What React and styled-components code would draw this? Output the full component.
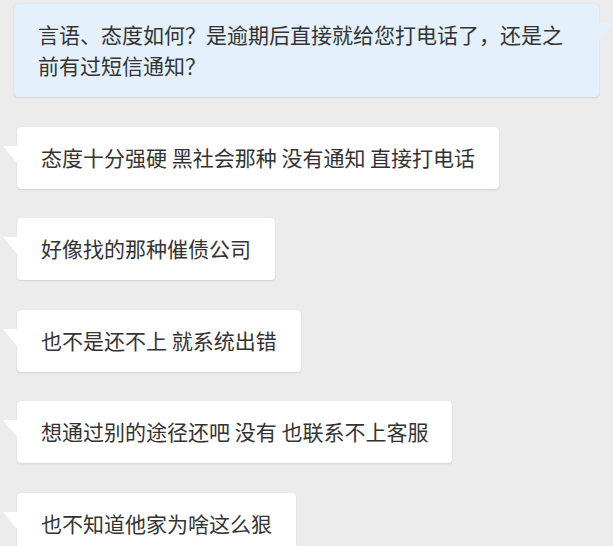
import React from 'react'
import styled, { createGlobalStyle } from 'styled-components'

const messages = [
  { from: 'me', text: '言语、态度如何？是逾期后直接就给您打电话了，还是之前有过短信通知？' },
  { from: 'them', text: '态度十分强硬 黑社会那种 没有通知 直接打电话' },
  { from: 'them', text: '好像找的那种催债公司' },
  { from: 'them', text: '也不是还不上 就系统出错' },
  { from: 'them', text: '想通过别的途径还吧 没有 也联系不上客服' },
  { from: 'them', text: '也不知道他家为啥这么狠' },
]

const GlobalStyle = createGlobalStyle`
  html, body {
    margin: 0;
    padding: 0;
    background: #ececec;
    overflow: hidden;
  }
  body {
    font-family: "Noto Sans CJK SC", "Noto Sans", sans-serif;
  }
`

const Chat = styled.div`
  display: flex;
  flex-direction: column;
  gap: 29.5px;
  padding: 4px 14px 0 17px;
  height: 546px;
  box-sizing: border-box;
`

const Row = styled.div`
  display: flex;
  justify-content: ${(p) => (p.$mine ? 'flex-end' : 'flex-start')};
  margin-left: ${(p) => (p.$mine ? '-3px' : '0')};
`

const Bubble = styled.div`
  position: relative;
  max-width: 585px;
  box-sizing: border-box;
  padding: 15px 24px 16px;
  border-radius: 4px;
  font-size: 21px;
  line-height: 31px;
  color: #333;
  background: ${(p) => (p.$mine ? '#e4f1fc' : '#ffffff')};
  box-shadow: 0 1px 2px rgba(0, 0, 0, 0.1), 0 0 1px rgba(0, 0, 0, 0.1);

  &::before {
    content: '';
    position: absolute;
    top: 19px;
    width: 0;
    height: 0;
    border-top: 17px solid ${(p) => (p.$mine ? '#e4f1fc' : '#ffffff')};
    ${(p) =>
      p.$mine
        ? 'right: -14px; border-right: 14px solid transparent;'
        : 'left: -14px; border-left: 14px solid transparent;'}
  }
`

export default function App() {
  return (
    <>
      <GlobalStyle />
      <Chat>
        {messages.map((m, i) => (
          <Row key={i} $mine={m.from === 'me'}>
            <Bubble $mine={m.from === 'me'}>{m.text}</Bubble>
          </Row>
        ))}
      </Chat>
    </>
  )
}
